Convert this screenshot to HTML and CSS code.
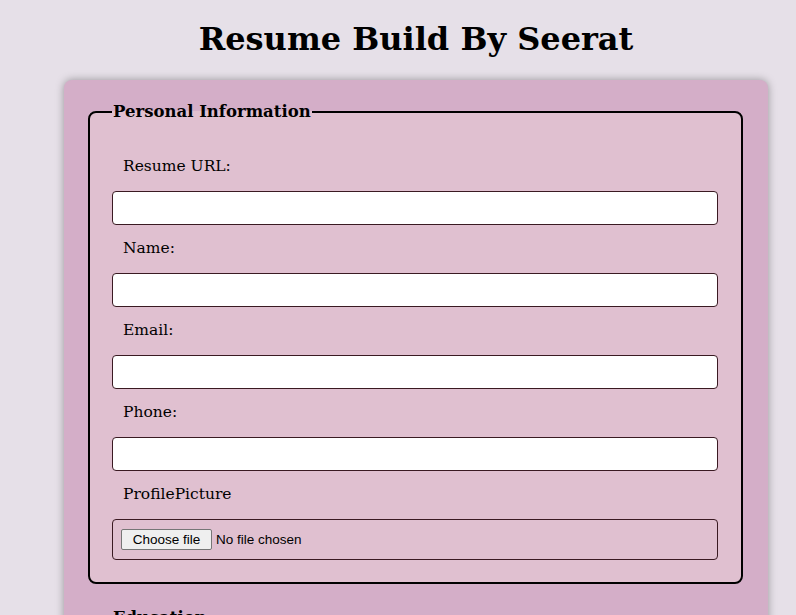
FILE: index.html
```html
<!DOCTYPE html>
<html lang="en">
<head>
<meta charset="utf-8">
<title>Resume Builder</title>
<link rel="stylesheet" href="styles.css">
</head>
<body>
<div class="page">
  <h1 class="title">Resume Build By Seerat</h1>
  <form class="card">
    <fieldset class="group">
      <legend class="legend">Personal Information</legend>
      <label class="label" for="url">Resume URL:</label>
      <input class="field" type="text" id="url">
      <label class="label" for="name">Name:</label>
      <input class="field" type="text" id="name">
      <label class="label" for="email">Email:</label>
      <input class="field" type="email" id="email">
      <label class="label" for="phone">Phone:</label>
      <input class="field" type="tel" id="phone">
      <label class="label" for="pic">ProfilePicture</label>
      <div class="field file">
        <input class="file-input" type="file" id="pic">
        <label class="file-btn" for="pic">Choose file</label>
        <span class="file-name">No file chosen</span>
      </div>
    </fieldset>
    <fieldset class="group">
      <legend class="legend">Education</legend>
      <label class="label" for="degree">Degree:</label>
      <input class="field" type="text" id="degree">
    </fieldset>
  </form>
</div>
</body>
</html>
```

FILE: styles.css
```css
html, body {
  margin: 0;
  padding: 0;
  background: #e6e0e8;
  overflow: hidden;
}
body {
  font-family: "DejaVu Serif", "Liberation Serif", serif;
  color: #000;
}
.page {
  width: 704px;
  margin-left: 64px;
}
.title {
  margin: 0;
  padding-top: 21px;
  height: 80px;
  box-sizing: border-box;
  text-align: center;
  font-size: 32px;
  line-height: 36px;
  font-weight: bold;
}
.card {
  background: #d4aec8;
  border-radius: 8px;
  box-shadow: 0 0 8px rgba(0, 0, 0, 0.35);
  padding: 22px 25px 20px 24px;
  margin: 0;
}
.group {
  margin: 0 0 24px 0;
  padding: 30px 23px 14px 22px;
  border: 2px solid #000;
  border-radius: 8px;
  background: #e0c0d0;
  min-width: 0;
}
.legend {
  font-weight: bold;
  font-size: 16.5px;
  padding: 0 1px;
}
.label {
  display: block;
  padding: 5px 11px 15px;
  font-size: 15.5px;
  line-height: 20px;
}
.field {
  display: block;
  width: 100%;
  box-sizing: border-box;
  height: 34px;
  margin: 0 0 8px 0;
  border: 1px solid #3a1a22;
  border-radius: 4px;
  background: #fff;
  font-size: 14px;
  padding: 4px 8px;
}
.field.file {
  height: 41px;
  background: transparent;
  padding: 0 8px;
  display: flex;
  align-items: center;
  gap: 4px;
  font-family: "Liberation Sans", Arial, sans-serif;
  font-size: 13.5px;
}
.file-input {
  display: none;
}
.file-btn {
  box-sizing: border-box;
  width: 91px;
  height: 21px;
  line-height: 19px;
  text-align: center;
  background: #efefef;
  border: 1px solid #767676;
  border-radius: 2px;
  color: #000;
}
.file-name {
  color: #000;
}
```
